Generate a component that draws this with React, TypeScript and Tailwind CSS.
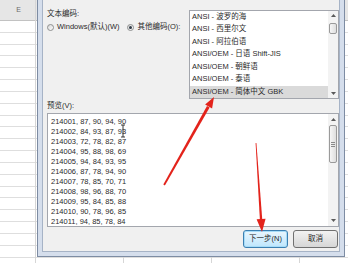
const encodings = [
  'ANSI - 波罗的海',
  'ANSI - 西里尔文',
  'ANSI - 阿拉伯语',
  'ANSI/OEM - 日语 Shift-JIS',
  'ANSI/OEM - 朝鲜语',
  'ANSI/OEM - 泰语',
  'ANSI/OEM - 简体中文 GBK',
];

const preview = [
  '214001, 87, 90, 94, 90',
  '214002, 84, 93, 87, 93',
  '214003, 72, 78, 82, 87',
  '214004, 95, 88, 98, 69',
  '214005, 94, 84, 93, 95',
  '214006, 87, 78, 94, 90',
  '214007, 78, 85, 70, 71',
  '214008, 98, 96, 88, 70',
  '214009, 95, 84, 85, 88',
  '214010, 90, 78, 96, 85',
  '214011, 94, 85, 78, 84',
];

const columns = ['E', '', '', '', ''];
const cells = Array.from({ length: 21 });

function Arrow({ up }: { up?: boolean }) {
  return (
    <svg width="5" height="3" viewBox="0 0 5 3">
      <path d={up ? 'M0 3 L2.5 0 L5 3 Z' : 'M0 0 L2.5 3 L5 0 Z'} fill="#5a5a5a" />
    </svg>
  );
}

function Radio({ checked }: { checked?: boolean }) {
  return (
    <span className="flex h-[7px] w-[7px] shrink-0 items-center justify-center rounded-full border border-[#8e8f8f] bg-gradient-to-br from-[#d6d6d6] to-white">
      {checked && <span className="h-[3px] w-[3px] rounded-full bg-[#2f3a46]" />}
    </span>
  );
}

export default function App() {
  return (
    <div className="relative h-[263px] w-[348px] overflow-hidden bg-white font-['Liberation_Sans','Noto_Sans_CJK_SC',sans-serif] text-[7.5px] text-[#2a2a2a]">
      {/* Spreadsheet behind the dialog */}
      <div className="ml-[-52px] flex">
        {columns.map((label, i) => (
          <div key={i} className="w-[88px] shrink-0 border-r border-[#d6d6d6]">
            <div className="flex h-[21px] items-center justify-end border-b border-[#c2c2c2] bg-[#e6e6e6] pr-[14px] text-[7px] text-[#6a6a6a]">
              {label}
            </div>
            {cells.map((_, j) => (
              <div key={j} className="h-[11.83px] border-b border-[#dedede]" />
            ))}
          </div>
        ))}
      </div>

      {/* Dialog window */}
      <div className="absolute left-[37px] top-[-8px] h-[265px] w-[308px] border border-[#7d8ca3] bg-[#d5deec] p-[4px]">
        <div className="flex h-full flex-col border border-[#a6b3c6] bg-[#f0f0f0] pl-[4px]">
          {/* Encoding row */}
          <div className="flex items-start">
            <div className="w-[142px] shrink-0 pt-[11px]">
              <div className="h-[10px] leading-[10px]">文本编码:</div>
              <div className="mt-[3px] flex h-[10px] items-center">
                <Radio />
                <span className="ml-[3px] leading-[10px]">Windows(默认)(W)</span>
                <span className="ml-[7px]">
                  <Radio checked />
                </span>
                <span className="ml-[4px] leading-[10px]">其他编码(O):</span>
              </div>
            </div>
            <div className="mt-[12px] flex h-[89px] w-[150px] border border-[#a3a6ad] bg-white">
              <div className="flex-1">
                {encodings.map((e, i) => (
                  <div
                    key={e}
                    className={`h-[12.43px] pl-[2px] leading-[12.43px] ${i === encodings.length - 1 ? 'bg-[#dadada]' : ''}`}
                  >
                    {e}
                  </div>
                ))}
              </div>
              <div className="flex w-[10px] flex-col items-center bg-[#f3f3f3] py-[3px]">
                <Arrow up />
                <div className="mt-[6px] h-[11px] w-[8px] rounded-[2px] border border-[#9a9a9a] bg-gradient-to-r from-[#f6f6f6] to-[#dedede]" />
                <div className="flex-1" />
                <Arrow />
              </div>
            </div>
          </div>

          {/* Preview */}
          <div className="mt-[2px] h-[10px] leading-[10px]">预览(V):</div>
          <div className="mt-[2px] flex h-[114px] border border-[#a3a6ad] bg-white">
            <div className="flex-1 pl-[3px] pt-[3px]">
              {preview.map((line) => (
                <div key={line} className="h-[10px] leading-[10px]">
                  {line}
                </div>
              ))}
            </div>
            <div className="flex w-[10px] flex-col items-center bg-[#f3f3f3] py-[4px]">
              <Arrow up />
              <div className="mt-[4px] flex h-[38px] w-[8px] flex-col items-center justify-center gap-[1px] rounded-[2px] border border-[#9a9a9a] bg-gradient-to-r from-[#f6f6f6] to-[#dedede]">
                <span className="h-px w-[4px] bg-[#8a8a8a]" />
                <span className="h-px w-[4px] bg-[#8a8a8a]" />
                <span className="h-px w-[4px] bg-[#8a8a8a]" />
              </div>
              <div className="flex-1" />
              <Arrow />
            </div>
          </div>

          {/* Buttons */}
          <div className="mt-[3px] flex justify-end gap-[5px] pr-[1px]">
            <button className="flex h-[18px] w-[45px] items-center justify-center rounded-[3px] border border-[#3c7fb1] bg-gradient-to-b from-[#eaf6fd] to-[#bee6fd] text-[7.5px] text-[#1e1e1e] shadow-[inset_0_0_0_1px_#a6dcf8]">
              下一步(N)
            </button>
            <button className="flex h-[18px] w-[45px] items-center justify-center rounded-[3px] border border-[#707070] bg-gradient-to-b from-[#f2f2f2] to-[#d6d6d6] text-[7.5px] text-[#1e1e1e]">
              取消
            </button>
          </div>
        </div>
      </div>

      {/* Annotations over the screenshot */}
      <svg className="pointer-events-none absolute left-0 top-0" width="348" height="263" viewBox="0 0 348 263">
        <path d="M121 125 H125 M123 125 V137 M121 137 H125" stroke="#222" strokeWidth="0.9" fill="none" />
        <polygon points="163.3,184.6 164.9,185.4 209.6,107.4 207,105.9" fill="#e3231b" />
        <polygon points="214,97 212.1,108.6 205.1,104.6" fill="#e3231b" />
        <polygon points="255.6,143 256.4,143 262.3,220 259.9,220" fill="#e3231b" />
        <polygon points="262,232 265.6,218.7 256.6,219.3" fill="#e3231b" />
      </svg>
    </div>
  );
}
